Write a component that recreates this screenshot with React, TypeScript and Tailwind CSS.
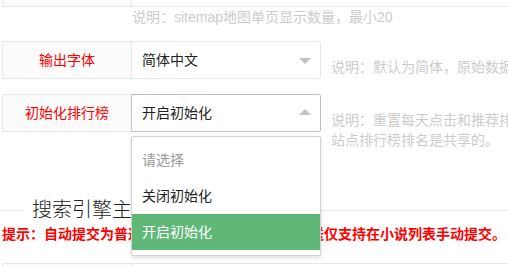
import React from "react";

const font = '"Liberation Sans", "Noto Sans CJK SC", sans-serif';

function Label({ text }: { text: string }) {
  return (
    <div className="w-[130px] h-[38px] shrink-0 border border-[#e6e6e6] bg-[#fbfbfb] rounded-l-[2px] flex items-center justify-center text-[14px] text-[#ff0000]">
      {text}
    </div>
  );
}

export default function App() {
  return (
    <div className="w-[508px] h-[266px] overflow-hidden bg-white text-[#333]" style={{ fontFamily: font }}>
      <div className="-mt-[31px] pl-[2px] w-[900px]">
        {/* Row 1 */}
        <div className="flex">
          <Label text="" />
          <div className="-ml-px w-[700px] h-[38px] border border-[#e6e6e6] bg-white" />
        </div>
        <div className="pl-[130px] h-[20px] leading-[20px] text-[14px] text-[#cccccc] mb-[14px] whitespace-nowrap">
          说明：sitemap地图单页显示数量，最小20
        </div>

        {/* Row 2 */}
        <div className="flex items-start mb-[15px]">
          <Label text="输出字体" />
          <div className="relative -ml-px w-[190px] shrink-0">
            <div className="relative h-[38px] border border-[#e6e6e6] bg-white rounded-r-[2px] pl-[10px] flex items-center text-[14px] text-[#222]">
              简体中文
              <span className="absolute right-[9px] top-1/2 mt-[-2px] w-0 h-0 border-x-[6px] border-x-transparent border-t-[6px] border-t-[#c2c2c2]" />
            </div>
          </div>
          <div className="ml-[10px] pt-[16px] leading-[20px] text-[14px] text-[#cccccc] whitespace-nowrap">
            说明：默认为简体，原始数据为繁体时请选择繁体中文
          </div>
        </div>

        {/* Row 3 */}
        <div className="flex items-start">
          <Label text="初始化排行榜" />
          <div className="relative -ml-px w-[190px] shrink-0 z-10">
            <div className="relative h-[38px] border border-[#c2c2c2] bg-white rounded-r-[2px] pl-[10px] flex items-center text-[14px] text-[#222]">
              开启初始化
              <span className="absolute right-[9px] top-1/2 mt-[-4px] w-0 h-0 border-x-[6px] border-x-transparent border-b-[6px] border-b-[#c2c2c2]" />
            </div>
            <div className="absolute left-0 top-[42px] w-full border border-[#d2d2d2] bg-white rounded-[2px] py-[5px] shadow-[0_2px_4px_rgba(0,0,0,0.12)] text-[14px]">
              <div className="h-[36px] leading-[36px] px-[10px] text-[#999]">请选择</div>
              <div className="h-[36px] leading-[36px] px-[10px] text-[#222]">关闭初始化</div>
              <div className="h-[36px] leading-[36px] px-[10px] bg-[#5fb878] text-white">开启初始化</div>
            </div>
          </div>
          <div className="ml-[10px] pt-[16px] leading-[20px] text-[14px] text-[#cccccc] whitespace-nowrap">
            说明：重置每天点击和推荐排行榜数据，所有
            <br />
            站点排行榜排名是共享的。
          </div>
        </div>

        {/* Fieldset */}
        <fieldset className="mt-[46px] w-[700px] border-t border-[#e6e6e6]">
          <legend className="ml-[20px] px-[10px] text-[20px] leading-[28px] font-light text-[#222]">
            搜索引擎主动推送设置
          </legend>
        </fieldset>
        <div className="h-[20px] leading-[20px] text-[14px] font-bold text-[#ff0000] whitespace-nowrap">
          提示：自动提交为普通收录推送，百度快速收录推送仅支持在小说列表手动提交。
        </div>

        {/* Bottom row */}
        <div className="flex mt-[19px]">
          <Label text="" />
          <div className="-ml-px w-[700px] h-[38px] border border-[#e6e6e6] bg-white" />
        </div>
      </div>
    </div>
  );
}
